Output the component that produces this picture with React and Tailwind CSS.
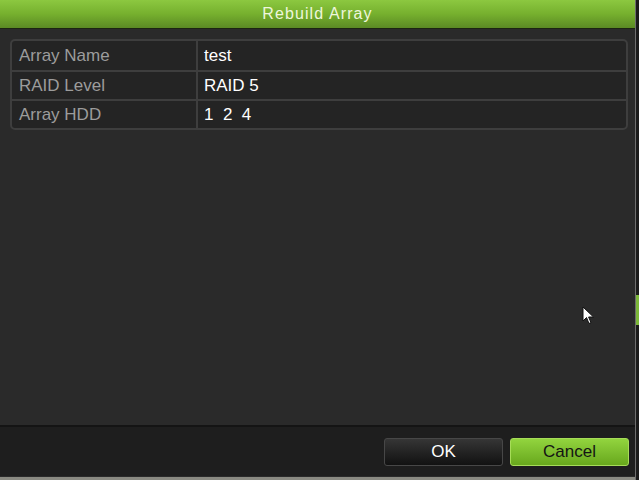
import React from 'react';

const rows = [
  { label: 'Array Name', value: 'test' },
  { label: 'RAID Level', value: 'RAID 5' },
  { label: 'Array HDD', value: '1  2  4' },
];

const Cursor = () => (
  <svg className="absolute left-[582px] top-[306px]" width="13" height="20" viewBox="0 0 13 20">
    <path d="M1 1 L1 15 L4.5 11.5 L7 17.5 L9 16.6 L6.6 11 L11.5 11 Z" fill="#ffffff" stroke="#111" strokeWidth="1" strokeLinejoin="round" />
  </svg>
);

const App = () => {
  return (
    <div className="relative w-[639px] h-[480px] flex bg-[#1b1b1b] overflow-hidden font-['Liberation_Sans',Arial,sans-serif]">
      {/* dialog */}
      <div className="w-[636px] h-full flex flex-col border-r border-[#6e6e6e] bg-[#2a2a2a]">
        <div className="h-[29px] flex items-center justify-center bg-gradient-to-b from-[#8cc840] via-[#76b02e] to-[#5b8a24] border-b border-[#1c2412]">
          <span className="text-[16px] tracking-[1.1px] text-[#eef6dc]">Rebuild Array</span>
        </div>

        <div className="flex-1 pl-[10px] pr-[7px] pt-[10px]">
          <div className="rounded-[5px] border-2 border-[#3e3e3e] bg-[#242424]">
            {rows.map((r, i) => (
              <div key={r.label} className={`flex h-[29px] ${i > 0 ? 'border-t-2 border-[#3e3e3e]' : ''}`}>
                <div className="w-[186px] pl-[7px] flex items-center border-r-2 border-[#3e3e3e] text-[17px] text-[#9c9c9c]">
                  {r.label}
                </div>
                <div className="flex-1 pl-[6px] flex items-center text-[17px] text-white whitespace-pre">
                  {r.value}
                </div>
              </div>
            ))}
          </div>
        </div>

        {/* footer */}
        <div className="h-[51px] flex items-center justify-end gap-[7px] pr-[6px] bg-[#1e1e1e] border-t-2 border-[#141414]">
          <button className="w-[119px] h-[28px] rounded-[3px] border border-[#474747] bg-gradient-to-b from-[#363636] to-[#121212] text-[17px] text-white">
            OK
          </button>
          <button className="w-[119px] h-[28px] rounded-[3px] border border-[#a6dc58] bg-gradient-to-b from-[#92d43e] to-[#68a81c] text-[17px] text-[#141414]">
            Cancel
          </button>
        </div>
        <div className="h-[4px] bg-[#8a8a82] border-t border-[#2a2a2a]"></div>
      </div>

      {/* strip of background on the right */}
      <div className="flex-1 flex flex-col">
        <div className="h-[295px]"></div>
        <div className="h-[30px] bg-[#7db93a]"></div>
      </div>

      <Cursor />
    </div>
  );
};

export default App;
